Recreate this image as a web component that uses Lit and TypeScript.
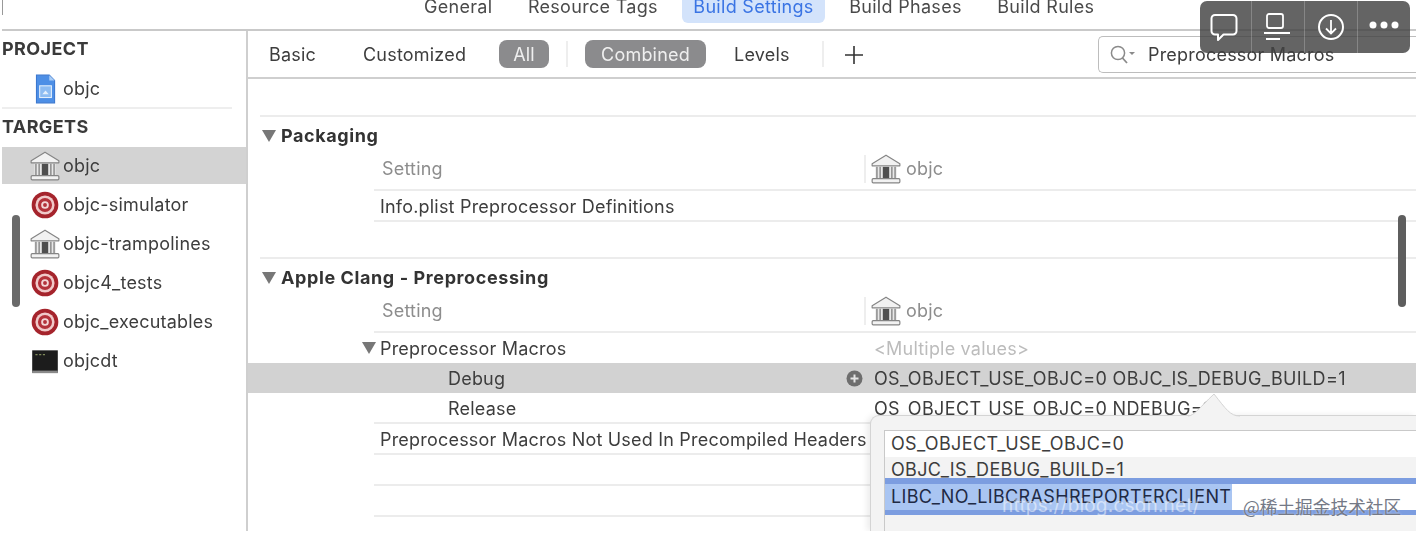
import { html, css, LitElement } from 'lit';
import { customElement } from 'lit/decorators.js';

const bank = html`<svg class="ico" viewBox="0 0 30 30">
  <path d="M15 2 L28 10 V12 H2 V10 Z" fill="#f2f2f2" stroke="#858585" stroke-width="1.1" stroke-linejoin="round"/>
  <path d="M5 13 h20 v11 h-20 z" fill="#e8e8e8"/>
  <path d="M6.5 13v11M9.5 13v11M20.5 13v11M23.5 13v11" stroke="#858585" stroke-width="1.3"/>
  <rect x="12" y="13" width="6" height="11" fill="#4f4f4f"/>
  <rect x="2" y="24" width="26" height="4" rx="1" fill="#f2f2f2" stroke="#858585" stroke-width="1.1"/>
</svg>`;

const target = html`<svg class="ico" viewBox="0 0 30 30">
  <circle cx="15" cy="15" r="12.5" fill="#a5242c"/>
  <circle cx="15" cy="15" r="9" fill="#f0c9c9"/>
  <circle cx="15" cy="15" r="6.6" fill="#b3323a"/>
  <circle cx="15" cy="15" r="3.6" fill="#f3d6d6"/>
  <circle cx="15" cy="15" r="1.8" fill="#b3323a"/>
</svg>`;

const doc = html`<svg class="ico" viewBox="0 0 30 30">
  <path d="M7 2 H19 L24 7 V28 H7 Z" fill="#4d8fe6" stroke="#3b78d0" stroke-width="1"/>
  <path d="M19 2 V7 H24" fill="#a9cdf6"/>
  <rect x="10" y="12" width="11" height="11" fill="#8dbcf2" stroke="#e3effc" stroke-width="1"/>
  <path d="M12.5 20 l3-3.500 3 3.500z" fill="#e3effc"/>
</svg>`;

const term = html`<svg class="ico" viewBox="0 0 30 30">
  <rect x="3" y="5" width="24" height="21" fill="#1c1c1c"/>
  <rect x="3" y="24" width="24" height="2.4" fill="#8a8a8a"/>
  <path d="M6 9 h2M9.5 9 h2M13 9 h2" stroke="#7f8a5a" stroke-width="1.2"/>
</svg>`;

const targets = [
  { name: 'objc', icon: bank, selected: true },
  { name: 'objc-simulator', icon: target },
  { name: 'objc-trampolines', icon: bank },
  { name: 'objc4_tests', icon: target },
  { name: 'objc_executables', icon: target },
  { name: 'objcdt', icon: term },
];

const tabs = ['General', 'Resource Tags', 'Build Settings', 'Build Phases', 'Build Rules'];

@customElement('app-root')
export class AppRoot extends LitElement {
  static styles = css`
    :host {
      display: block;
      position: relative;
      width: 1420px;
      height: 534px;
      overflow: hidden;
      background: #fff;
      font-family: Inter, 'Liberation Sans', sans-serif;
      font-size: 18px;
      letter-spacing: 0.2px;
      color: #3d3d3d;
    }

    .frame {
      position: relative;
      margin-left: 2px;
      width: 1414px;
      height: 531px;
      overflow: hidden;
      filter: blur(0.6px);
    }

    .tabs {
      display: flex;
      height: 29px;
      gap: 12.5px;
      border-bottom: 2px solid #c9c9c9;
    }
    .tick { width: 1px; height: 15px; background: #999; margin-right: 397px; flex: none; }
    .tab { height: 23px; padding: 0 11.5px; line-height: 14px; letter-spacing: 0.3px; color: #4a4a4a; border-radius: 0 0 6px 6px; white-space: nowrap; }
    .tab.on { background: #d3e3fb; color: #3a74e4; }

    .body { display: flex; height: 500px; }

    .side { width: 244px; flex: none; border-right: 2px solid #cfcfcf; }
    .head { height: 36px; line-height: 36px; font-weight: 700; color: #3a3a3a; letter-spacing: 0.4px; }
    .item { display: flex; align-items: center; height: 37px; padding-left: 27px; margin-bottom: 2px; gap: 2px; }
    .item.on { background: #d3d3d3; }
    .ico { width: 32px; height: 32px; flex: none; }
    .rule { width: 230px; border-top: 2px solid #eee; }

    .main { flex: 1; min-width: 0; }

    .filters { display: flex; align-items: center; height: 46px; border-bottom: 2px solid #cfcfcf; }
    .f { white-space: nowrap; }
    .pill { height: 28px; line-height: 30px; border-radius: 8px; background: #8b8b8d; color: #efefef; text-align: center; }
    .sep { width: 2px; height: 26px; background: #eee; }
    .plus { width: 20px; height: 20px; margin-top: 2px; }
    .search {
      display: flex;
      align-items: center;
      margin-left: 234px;
      flex: 1;
      height: 35px;
      border: 1.5px solid #bdbdbd;
      border-right: 0;
      border-radius: 5px 0 0 5px;
      white-space: nowrap;
    }
    .search svg { width: 28px; height: 22px; margin: 0 11px 0 10px; flex: none; }

    .scroll { height: 36px; }
    .line { margin-left: 12px; border-top: 2px solid #ececec; }
    .sect { display: flex; align-items: center; height: 37px; margin-left: 14px; font-weight: 700; color: #333; gap: 5px; letter-spacing: 0.6px; }
    .tri { width: 0; height: 0; border-left: 7px solid transparent; border-right: 7px solid transparent; border-top: 12px solid #777; flex: none; }

    .row { display: flex; align-items: center; height: 27px; padding-top: 2px; margin-left: 126px; border-bottom: 2px solid #ececec; white-space: nowrap; }
    .row.tall { height: 29px; padding: 0 0 6px; }
    .row.open { margin-left: 114px; height: 30px; padding: 0; border: 0; }
    .row.open .tri { margin-right: 2px; }
    .row.sel { margin-left: 0; padding: 0 0 0 126px; height: 30px; background: #d2d2d2; border: 0; }
    .name { display: flex; align-items: center; justify-content: space-between; box-sizing: border-box; width: 490px; padding-left: 6px; flex: none; }
    .name.grey { padding-left: 8px; color: #8d8d8d; }
    .name.sub { padding-left: 74px; }
    .row.open .name { width: 484px; padding-left: 0; margin-left: 2px; }
    .val { padding-left: 10px; letter-spacing: 0.35px; }
    .val.dim { color: #bcbcbc; letter-spacing: 0.2px; }
    .col { display: flex; align-items: center; gap: 4px; height: 28px; border-left: 2px solid #eee; padding-left: 4px; color: #8d8d8d; }
    .add { width: 17px; height: 17px; margin-right: 1px; flex: none; }
    .gap1 { height: 35px; }

    .tool {
      position: absolute;
      left: 1198px;
      top: 1px;
      width: 210px;
      height: 52px;
      display: flex;
      border-radius: 7px;
      background: rgba(66, 66, 66, 0.82);
      overflow: hidden;
    }
    .tool div { width: 54px; display: flex; align-items: center; justify-content: center; border-left: 1px solid rgba(255, 255, 255, 0.22); }
    .tool div:first-child { border-left: 0; width: 53px; }
    .tool svg { width: 34px; height: 34px; }

    .bar { position: absolute; top: 215px; width: 8px; height: 92px; border-radius: 4px; background: #6a6a6a; }
    .bar.l { left: 10px; }
    .bar.r { left: 1396px; background: #5e5e5e; }

    .pop {
      position: absolute;
      left: 868px;
      top: 415px;
      width: 546px;
      height: 116px;
      box-sizing: border-box;
      padding: 14px 0 0 13px;
      background: #f3f3f3;
      border: 1px solid #d4d4d4;
      border-right: 0;
      border-bottom: 0;
      border-radius: 9px 0 0 0;
      box-shadow: -3px 0 6px rgba(0, 0, 0, 0.08);
    }
    .arrow { position: absolute; left: 1184px; top: 393px; width: 56px; height: 24px; }
    .field { height: 102px; background: #f3f3f3; border-top: 1px solid #c9c9c9; border-left: 1px solid #c9c9c9; letter-spacing: 0.35px; }
    .ln { box-sizing: border-box; padding-left: 6px; white-space: nowrap; }
    .ln.a { height: 26px; line-height: 26px; background: #fff; }
    .ln.b { height: 21px; line-height: 25px; background: #f3f3f3; }
    .ln.c { height: 37px; padding: 6px 0 5px; background: #7c9de0; }
    .c-in { display: flex; height: 26px; background: #fff; }
    .picked { width: 347px; padding-left: 6px; box-sizing: border-box; line-height: 26px; background: #a9c5f2; flex: none; color: #1f2a44; }

    .mark { position: absolute; left: 1000px; top: 493px; font-size: 19px; line-height: 26px; color: rgba(255, 255, 255, 0.5); white-space: nowrap; }
    .cn {
      position: absolute;
      left: 1241px;
      top: 494px;
      font: 17.7px/24px 'Noto Sans CJK SC', sans-serif;
      letter-spacing: 0;
      color: #747986;
      text-shadow: 0 0 2px rgba(255, 255, 255, 0.7);
      white-space: nowrap;
    }
  `;

  render() {
    return html`
      <div class="frame">
        <div class="tabs">
          <span class="tick"></span>
          ${tabs.map((t) => html`<div class=${t === 'Build Settings' ? 'tab on' : 'tab'}>${t}</div>`)}
        </div>
        <div class="body">
          <div class="side">
            <div class="head">PROJECT</div>
            <div class="item" style="margin:3px 0 0">${doc}<span>objc</span></div>
            <div class="rule"></div>
            <div class="head" style="margin-bottom:2px">TARGETS</div>
            ${targets.map(
              (t) => html`<div class=${t.selected ? 'item on' : 'item'}>${t.icon}<span>${t.name}</span></div>`,
            )}
          </div>
          <div class="main">
            <div class="filters">
              <span class="f" style="margin-left:21px;width:48px">Basic</span>
              <span class="f" style="margin-left:46px;width:105px">Customized</span>
              <span class="f pill" style="margin-left:31px;width:50px">All</span>
              <span class="sep" style="margin-left:17px"></span>
              <span class="f pill" style="margin-left:17px;width:121px">Combined</span>
              <span class="f" style="margin-left:28px;width:56px">Levels</span>
              <span class="sep" style="margin-left:32px"></span>
              <svg class="plus" style="margin-left:20px" viewBox="0 0 20 20">
                <path d="M10 1v18M1 10h18" stroke="#333" stroke-width="1.6"/>
              </svg>
              <div class="search">
                <svg viewBox="0 0 28 22">
                  <circle cx="9" cy="10" r="6.6" fill="none" stroke="#8a8a8a" stroke-width="1.5"/>
                  <path d="M13.5 15 L18 20" stroke="#8a8a8a" stroke-width="1.8"/>
                  <path d="M20 9 l3 3 3-3z" fill="#8a8a8a"/>
                </svg>
                <span>Preprocessor Macros</span>
              </div>
            </div>
            <div class="scroll"></div>
            <div class="line"></div>
            <div class="sect"><span class="tri"></span>Packaging</div>
            ${this.header()}
            <div class="row"><div class="name">Info.plist Preprocessor Definitions</div></div>
            <div class="gap1"></div>
            <div class="line"></div>
            <div class="sect"><span class="tri"></span>Apple Clang - Preprocessing</div>
            ${this.header()}
            <div class="row open">
              <span class="tri"></span>
              <div class="name">Preprocessor Macros</div>
              <div class="val dim">&lt;Multiple values&gt;</div>
            </div>
            <div class="row sel">
              <div class="name sub">
                <span>Debug</span>
                <svg class="add" viewBox="0 0 17 17">
                  <circle cx="8.5" cy="8.5" r="8" fill="#6e6e6e"/>
                  <path d="M8.5 4.5v8M4.5 8.5h8" stroke="#e4e4e4" stroke-width="2"/>
                </svg>
              </div>
              <div class="val">OS_OBJECT_USE_OBJC=0 OBJC_IS_DEBUG_BUILD=1</div>
            </div>
            <div class="row">
              <div class="name sub">Release</div>
              <div class="val">OS_OBJECT_USE_OBJC=0 NDEBUG=1</div>
            </div>
            <div class="row"><div class="name">Preprocessor Macros Not Used In Precompiled Headers</div></div>
            <div class="row"></div>
            <div class="row"></div>
          </div>
        </div>

        <span class="bar l"></span>
        <span class="bar r"></span>

        <div class="pop">
          <div class="field">
            <div class="ln a">OS_OBJECT_USE_OBJC=0</div>
            <div class="ln b">OBJC_IS_DEBUG_BUILD=1</div>
            <div class="ln c">
              <div class="c-in"><span class="picked">LIBC_NO_LIBCRASHREPORTERCLIENT</span></div>
            </div>
          </div>
        </div>
        <svg class="arrow" viewBox="0 0 56 24">
          <path d="M2 23 C8 23 14 14 28 1 C40 16 44 23 54 23 V24 H2 Z" fill="#f3f3f3"/>
          <path d="M2 23 C8 23 14 14 28 1 C40 16 44 23 54 23" fill="none" stroke="#d4d4d4"/>
        </svg>

        <div class="mark">https://blog.csdn.net/</div>
        <div class="cn">@稀土掘金技术社区</div>

        <div class="tool">
          <div>
            <svg viewBox="0 0 34 34">
              <path d="M6 5 H24 a3.5 3.5 0 0 1 3.5 3.500 V21 a3.5 3.5 0 0 1 -3.5 3.500 H14.500 L9 30 V24.500 H6 a3.5 3.5 0 0 1 -3.5 -3.500 V8.500 a3.500 3.500 0 0 1 3.500 -3.500 Z" fill="none" stroke="#fff" stroke-width="2" stroke-linejoin="round"/>
            </svg>
          </div>
          <div>
            <svg viewBox="0 0 34 34">
              <rect x="6" y="4" width="16" height="14" rx="2" fill="none" stroke="#fff" stroke-width="1.8"/>
              <path d="M3 23h26M5 29h14" stroke="#fff" stroke-width="2"/>
            </svg>
          </div>
          <div>
            <svg viewBox="0 0 34 34">
              <circle cx="17" cy="17" r="12" fill="none" stroke="#fff" stroke-width="2"/>
              <path d="M17 10v13M12 18.500l5 5 5-5" fill="none" stroke="#fff" stroke-width="1.800"/>
            </svg>
          </div>
          <div>
            <svg viewBox="0 0 34 34">
              <circle cx="6" cy="15" r="3.500" fill="#fff"/>
              <circle cx="17" cy="15" r="3.500" fill="#fff"/>
              <circle cx="28" cy="15" r="3.500" fill="#fff"/>
            </svg>
          </div>
        </div>
      </div>
    `;
  }

  private header() {
    return html`
      <div class="row tall">
        <div class="name grey">Setting</div>
        <div class="col">${bank}<span>objc</span></div>
      </div>
    `;
  }
}
